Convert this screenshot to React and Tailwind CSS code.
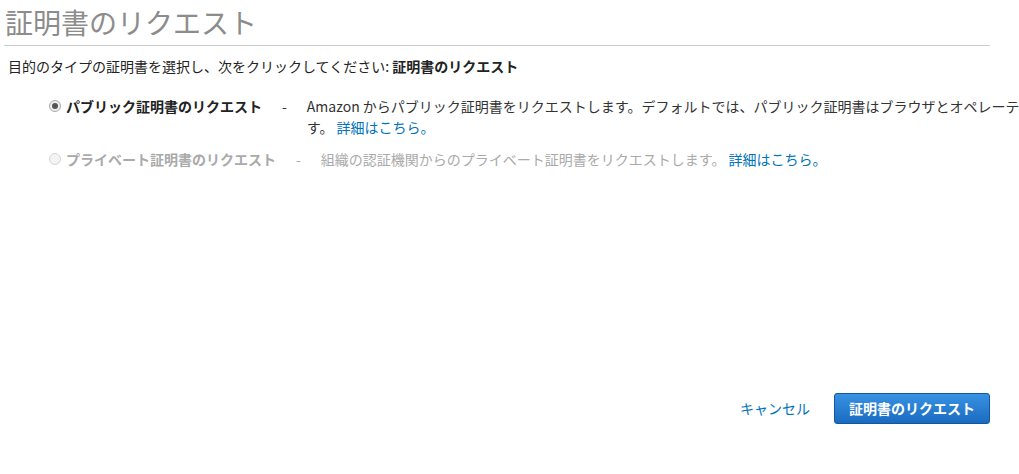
import React from 'react';

const font = { fontFamily: '"Noto Sans CJK JP", "Noto Sans", sans-serif' };

function Radio({ checked, disabled }) {
  return (
    <span
      className={`mt-[4px] mr-[5px] flex h-[12px] w-[12px] shrink-0 items-center justify-center rounded-full border ${
        disabled ? 'border-[#d6d6d6] bg-[#f3f3f3]' : 'border-[#a9a9a9] bg-[#eeeeee]'
      }`}
    >
      {checked && <span className="h-[6px] w-[6px] rounded-full bg-[#555]" />}
    </span>
  );
}

export default function App() {
  return (
    <div className="h-[474px] w-[1019px] overflow-hidden bg-white text-[14px] text-[#333]" style={font}>
      <div className="pl-[4px] pr-[29px]">
        <h1 className="pt-[2px] pl-[1px] text-[28px] font-normal leading-[40px] text-[#8c8c8c]">証明書のリクエスト</h1>
        <div className="mt-[3px] h-px bg-[#cccccc]" />
        <p className="mt-[9px] pl-[4px] leading-[22px] text-[#222]">
          目的のタイプの証明書を選択し、次をクリックしてください: <span className="font-bold">証明書のリクエスト</span>
        </p>
      </div>

      <div className="mt-[19px] pl-[49px]">
        <div className="flex items-start leading-[21px]">
          <Radio checked />
          <span className="font-bold text-[#222] whitespace-nowrap">パブリック証明書のリクエスト</span>
          <span className="mx-[20px] whitespace-nowrap">-</span>
          <div className="w-[900px] shrink-0 text-[#333]">
            <div className="whitespace-nowrap">
              Amazon からパブリック証明書をリクエストします。デフォルトでは、パブリック証明書はブラウザとオペレーティングシステムによって信頼されていま
            </div>
            <div className="whitespace-nowrap">
              す。 <a className="text-[#0073bb]" href="#">詳細はこちら。</a>
            </div>
          </div>
        </div>

        <div className="mt-[11px] flex items-start leading-[21px] text-[#aaaaaa]">
          <Radio disabled />
          <span className="font-bold whitespace-nowrap">プライベート証明書のリクエスト</span>
          <span className="mx-[20px] whitespace-nowrap">-</span>
          <span className="whitespace-nowrap">
            組織の認証機関からのプライベート証明書をリクエストします。 <a className="text-[#0073bb]" href="#">詳細はこちら。</a>
          </span>
        </div>
      </div>

      <div className="mt-[223px] flex items-center justify-end pr-[29px]">
        <a href="#" className="mr-[24px] text-[#0073bb]">キャンセル</a>
        <button className="h-[31px] w-[156px] rounded-[3px] border border-[#14579c] bg-gradient-to-b from-[#3892e4] to-[#1a6bc0] text-[14px] font-bold text-white">
          証明書のリクエスト
        </button>
      </div>
    </div>
  );
}
